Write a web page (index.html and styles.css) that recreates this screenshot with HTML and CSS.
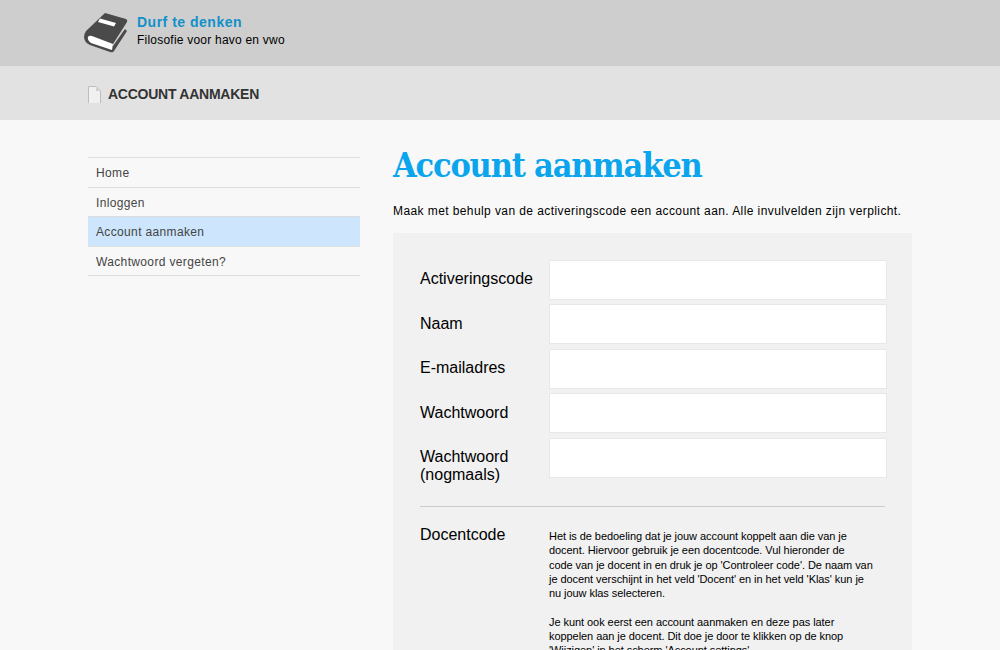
FILE: index.html
```html
<!DOCTYPE html>
<html lang="nl">
<head>
<meta charset="utf-8">
<title>Account aanmaken</title>
<link rel="stylesheet" href="styles.css">
</head>
<body>
<header class="top">
  <div class="wrap brand">
    <svg class="logo" width="46" height="42" viewBox="0 0 46 42">
      <path fill="#4a4a4a" d="M21 0 L42 6 Q44 7 43 9 L29 31 L29 33 L41 16 L43 18 L30 38 Q29 40 26 39 L6 32 Q0 29 0 24 Q0 21 2 18 Z"/>
      <path fill="#fff" d="M4 24 Q5 22 8 23 L29 31 L28 37 L7 30 Q3 27 4 24 Z"/>
      <path fill="#fff" d="M16 5.500 L32 10 L30 13.500 L14 9 Z"/>
    </svg>
    <div class="brand-text">
      <div class="brand-name">Durf te denken</div>
      <div class="brand-sub">Filosofie voor havo en vwo</div>
    </div>
  </div>
</header>
<div class="crumb">
  <div class="wrap crumb-in">
    <svg class="page-icon" width="13" height="17" viewBox="0 0 13 17">
      <path fill="#f0f0f0" stroke="#bdbdbd" d="M0.500 17 V0.500 H8 L12.500 5 V17"/>
      <path fill="#d0d0d0" d="M8 1 V5 H12 Z"/>
    </svg>
    <span class="crumb-title">ACCOUNT AANMAKEN</span>
  </div>
</div>
<div class="wrap content">
  <nav class="side">
    <a class="side-link">Home</a>
    <a class="side-link">Inloggen</a>
    <a class="side-link active">Account aanmaken</a>
    <a class="side-link">Wachtwoord vergeten?</a>
  </nav>
  <main class="main">
    <h1 class="title">Account aanmaken</h1>
    <p class="intro">Maak met behulp van de activeringscode een account aan. Alle invulvelden zijn verplicht.</p>
    <form class="panel">
      <div class="row"><label class="lbl">Activeringscode</label><input class="field" type="text"></div>
      <div class="row"><label class="lbl">Naam</label><input class="field" type="text"></div>
      <div class="row"><label class="lbl">E-mailadres</label><input class="field" type="text"></div>
      <div class="row"><label class="lbl">Wachtwoord</label><input class="field" type="password"></div>
      <div class="row"><label class="lbl">Wachtwoord (nogmaals)</label><input class="field" type="password"></div>
      <hr class="rule">
      <div class="row help-row">
        <label class="lbl">Docentcode</label>
        <div class="help">
          <p>Het is de bedoeling dat je jouw account koppelt aan die van je docent. Hiervoor gebruik je een docentcode. Vul hieronder de<br>code van je docent in en druk je op 'Controleer code'. De naam van je docent verschijnt in het veld 'Docent' en in het veld 'Klas' kun je nu jouw klas selecteren.</p>
          <p>Je kunt ook eerst een account aanmaken en deze pas later koppelen aan je docent. Dit doe je door te klikken op de knop 'Wijzigen' in het scherm 'Account settings'.</p>
        </div>
      </div>
    </form>
  </main>
</div>
</body>
</html>
```
FILE: styles.css
```css
* { box-sizing: border-box; }
html, body { margin: 0; height: 650px; overflow: hidden; }
body { background: #f8f8f8; color: #000; font-family: "Liberation Sans", Arial, sans-serif; }
.wrap { width: 824px; margin-left: 88px; }
.top { height: 66px; background: #cecece; }
.brand { display: flex; align-items: flex-start; margin-left: 84px; padding-top: 13px; gap: 7px; }
.logo { flex: none; }
.brand-text { padding-top: 0; }
.brand-name { font-size: 14px; line-height: 18px; font-weight: bold; color: #1191c9; letter-spacing: 0.5px; }
.brand-sub { font-size: 12px; line-height: 19px; letter-spacing: 0.22px; }
.crumb { height: 54px; background: #e2e2e2; }
.crumb-in { display: flex; align-items: center; height: 54px; gap: 7px; padding-top: 2px; }
.page-icon { flex: none; }
.crumb-title { font-size: 14px; font-weight: bold; color: #333; letter-spacing: -0.25px; }
.content { display: flex; padding-top: 37px; gap: 33px; }
.side { width: 272px; flex: none; border-top: 1px solid #dedede; align-self: flex-start; }
.side-link { display: block; height: 29.500px; line-height: 30px; padding-left: 8px; font-size: 12px; color: #444; border-bottom: 1px solid #dedede; letter-spacing: 0.35px; }
.active { background: #cde6fd; }
.main { width: 519px; flex: none; }
.title { margin: 0; height: 46px; font-family: "DejaVu Serif Condensed", "DejaVu Serif", serif; font-weight: bold; font-size: 34px; line-height: 16px; color: #0aa5ec; letter-spacing: -1.2px; }
.intro { margin: 0; font-size: 12px; line-height: 16px; letter-spacing: 0.41px; }
.panel { margin-top: 14px; background: #f1f1f1; padding: 27px 25px 40px 27px; min-height: 600px; }
.row { display: flex; margin-bottom: 4.400px; }
.lbl { width: 129px; flex: none; font-size: 16px; line-height: 18px; padding-top: 10.400px; }
.field { width: 338px; height: 40px; background: #fff; border: 1px solid #e8e8e8; flex: none; margin: 0; }
.rule { border: 0; border-top: 1px solid #ccc; margin: 22px 0 0; width: 465px; }
.help-row { margin-top: 19px; }
.help-row .lbl { padding-top: 0; }
.help { width: 325px; font-size: 11px; line-height: 14.300px; padding-top: 3px; letter-spacing: -0.06px; }
.help p { margin: 0 0 14.300px; }
```
